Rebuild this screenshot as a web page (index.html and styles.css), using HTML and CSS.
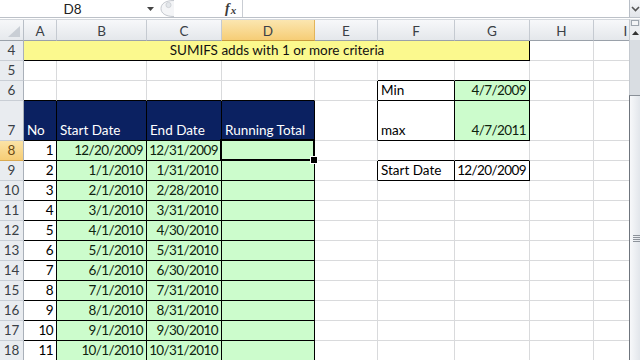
FILE: index.html
```html
<!DOCTYPE html>
<html>
<head>
<meta charset="utf-8">
<link rel="stylesheet" href="styles.css">
</head>
<body>
<div class="app">
  <div class="fbar">
    <div class="namebox"><span class="nb-text">D8</span>
      <svg class="caret" width="7" height="4" viewBox="0 0 7 4"><path d="M0 0H7L3.5 4Z" fill="#444"/></svg>
    </div>
    <div class="splitter">
      <svg width="20" height="17" viewBox="0 0 20 17"><path d="M16 0.5C7 0.5 3 4 3 8.5C3 13 7 16.5 16 16.5" fill="#f4f5f7" stroke="#c4c8ce"/><circle cx="10.5" cy="5" r="2.6" fill="#e3e6ea" stroke="#c9cdd2" stroke-width="0.8"/></svg>
    </div>
    <div class="fx"><span class="fx-f">f</span><span class="fx-x">x</span></div>
    <div class="finput"></div>
    <div class="fexpand">
      <svg width="9" height="6" viewBox="0 0 9 6"><path d="M1 1L4.5 4.5L8 1" fill="none" stroke="#555" stroke-width="1.6"/></svg>
    </div>
  </div>
  <div class="main">
    <div class="sheet">
      <!-- header row -->
      <div class="corner"><svg width="12" height="11" viewBox="0 0 12 11"><path d="M12 0V11H0Z" fill="#c9ced5"/></svg></div>
      <div class="ch">A</div><div class="ch">B</div><div class="ch">C</div><div class="ch ch-sel">D</div><div class="ch">E</div><div class="ch">F</div><div class="ch">G</div><div class="ch">H</div><div class="ch">I</div>

      <!-- row 4 -->
      <div class="rh">4</div>
      <div class="c y ctr br bb span7">SUMIFS adds with 1 or more criteria</div>
      <div class="c"></div><div class="c"></div>

      <!-- row 5 -->
      <div class="rh">5</div>
      <div class="c"></div><div class="c"></div><div class="c"></div><div class="c"></div><div class="c"></div>
      <div class="c bb"></div><div class="c bb"></div><div class="c"></div><div class="c"></div>

      <!-- row 6 -->
      <div class="rh">6</div>
      <div class="c bb"></div><div class="c bb"></div><div class="c bb"></div><div class="c bb"></div><div class="c br"></div>
      <div class="c br bb">Min</div><div class="c g num br bb">4/7/2009</div><div class="c"></div><div class="c"></div>

      <!-- row 7 -->
      <div class="rh">7</div>
      <div class="c nv br bb">No</div><div class="c nv br bb">Start Date</div><div class="c nv br bb">End Date</div><div class="c nv br bb">Running Total</div>
      <div class="c br"></div>
      <div class="c br bb">max</div><div class="c g num br bb">4/7/2011</div><div class="c"></div><div class="c"></div>

      <!-- row 8 -->
      <div class="rh rh-sel">8</div>
      <div class="c num br bb">1</div><div class="c g num br bb">12/20/2009</div><div class="c g num br bb">12/31/2009</div><div class="c g br bb sel"></div>
      <div class="c"></div><div class="c bb"></div><div class="c bb"></div><div class="c"></div><div class="c"></div>

      <!-- row 9 -->
      <div class="rh">9</div>
      <div class="c num br bb">2</div><div class="c g num br bb">1/1/2010</div><div class="c g num br bb">1/31/2010</div><div class="c g br bb"></div>
      <div class="c br"></div><div class="c br bb">Start Date</div><div class="c num br bb">12/20/2009</div><div class="c"></div><div class="c"></div>

      <!-- row 10 -->
      <div class="rh">10</div>
      <div class="c num br bb">3</div><div class="c g num br bb">2/1/2010</div><div class="c g num br bb">2/28/2010</div><div class="c g br bb"></div>
      <div class="c"></div><div class="c"></div><div class="c"></div><div class="c"></div><div class="c"></div>

      <!-- row 11 -->
      <div class="rh">11</div>
      <div class="c num br bb">4</div><div class="c g num br bb">3/1/2010</div><div class="c g num br bb">3/31/2010</div><div class="c g br bb"></div>
      <div class="c"></div><div class="c"></div><div class="c"></div><div class="c"></div><div class="c"></div>

      <!-- row 12 -->
      <div class="rh">12</div>
      <div class="c num br bb">5</div><div class="c g num br bb">4/1/2010</div><div class="c g num br bb">4/30/2010</div><div class="c g br bb"></div>
      <div class="c"></div><div class="c"></div><div class="c"></div><div class="c"></div><div class="c"></div>

      <!-- row 13 -->
      <div class="rh">13</div>
      <div class="c num br bb">6</div><div class="c g num br bb">5/1/2010</div><div class="c g num br bb">5/31/2010</div><div class="c g br bb"></div>
      <div class="c"></div><div class="c"></div><div class="c"></div><div class="c"></div><div class="c"></div>

      <!-- row 14 -->
      <div class="rh">14</div>
      <div class="c num br bb">7</div><div class="c g num br bb">6/1/2010</div><div class="c g num br bb">6/30/2010</div><div class="c g br bb"></div>
      <div class="c"></div><div class="c"></div><div class="c"></div><div class="c"></div><div class="c"></div>

      <!-- row 15 -->
      <div class="rh">15</div>
      <div class="c num br bb">8</div><div class="c g num br bb">7/1/2010</div><div class="c g num br bb">7/31/2010</div><div class="c g br bb"></div>
      <div class="c"></div><div class="c"></div><div class="c"></div><div class="c"></div><div class="c"></div>

      <!-- row 16 -->
      <div class="rh">16</div>
      <div class="c num br bb">9</div><div class="c g num br bb">8/1/2010</div><div class="c g num br bb">8/31/2010</div><div class="c g br bb"></div>
      <div class="c"></div><div class="c"></div><div class="c"></div><div class="c"></div><div class="c"></div>

      <!-- row 17 -->
      <div class="rh">17</div>
      <div class="c num br bb">10</div><div class="c g num br bb">9/1/2010</div><div class="c g num br bb">9/30/2010</div><div class="c g br bb"></div>
      <div class="c"></div><div class="c"></div><div class="c"></div><div class="c"></div><div class="c"></div>

      <!-- row 18 -->
      <div class="rh">18</div>
      <div class="c num br bb">11</div><div class="c g num br bb">10/1/2010</div><div class="c g num br bb">10/31/2010</div><div class="c g br bb"></div>
      <div class="c"></div><div class="c"></div><div class="c"></div><div class="c"></div><div class="c"></div>
    </div>
    <div class="vscroll">
      <div class="vs-split"></div>
      <div class="vs-up"><svg width="7" height="4" viewBox="0 0 7 4"><path d="M0 4H7L3.5 0Z" fill="#333"/></svg></div>
      <div class="vs-track"></div>
      <div class="vs-thumb">
        <div class="grip"><span></span><span></span><span></span><span></span></div>
      </div>
    </div>
  </div>
</div>
</body>
</html>
```
FILE: styles.css
```css
* { box-sizing: border-box; }
html, body { margin: 0; padding: 0; }
body {
  width: 640px;
  height: 360px;
  overflow: hidden;
  background: #fff;
  font-family: Lato, "Open Sans", sans-serif;
}
.app { width: 640px; height: 360px; display: flex; flex-direction: column; }

/* formula bar */
.fbar {
  height: 18px;
  display: flex;
  border-bottom: 1px solid #bcc1c8;
  background: #fff;
  flex: none;
}
.namebox {
  width: 158px;
  position: relative;
  display: flex;
  align-items: center;
}
.nb-text {
  width: 145px;
  text-align: center;
  font-size: 13.5px;
  color: #222;
  padding-top: 1px;
}
.caret { margin-left: 2px; }
.splitter { width: 66px; display: flex; align-items: flex-start; }
.fx {
  width: 19px;
  font-family: "Liberation Serif", serif;
  font-style: italic;
  font-weight: bold;
  font-size: 14px;
  color: #3a3a3a;
  display: flex;
  align-items: center;
  border-right: 1px solid #c9cdd3;
  padding-left: 1px;
}
.fx-x { font-size: 11px; margin-left: 1px; margin-top: 2px; }
.finput { flex: 1; }
.fexpand {
  width: 11px;
  border-left: 1px solid #b8bec6;
  background: linear-gradient(#f5f6f8, #e2e5ea);
  display: flex;
  align-items: center;
  justify-content: center;
}

.main {
  flex: 1;
  display: flex;
  margin-top: 1px;
  min-height: 0;
}
.sheet {
  width: 629px;
  overflow: hidden;
  display: grid;
  grid-template-columns: 24px 33px 90px 75px 93px 63px 77px 75px 64px 64px;
  grid-template-rows: 21px 20px 20px 20px 40px repeat(11, 20px);
  font-size: 13.5px;
  color: #000;
  border-top: 1px solid #d4d8dd;
}

.corner {
  background: linear-gradient(#f6f7f9, #e6e9ed);
  border-right: 1px solid #b8bec6;
  border-bottom: 1px solid #9aa1aa;
  display: flex;
  align-items: flex-end;
  justify-content: flex-end;
  padding: 0 3px 3px 0;
}
.ch {
  background: linear-gradient(#f7f8fa, #e4e7eb);
  border-right: 1px solid #c5cad1;
  border-bottom: 1px solid #9aa1aa;
  display: flex;
  align-items: center;
  justify-content: center;
  color: #3a3f46;
  padding-top: 1px;
}
.ch-sel {
  background: linear-gradient(#fbe6b0, #f6cd76);
  border-right-color: #e2b45a;
  border-bottom-color: #c99a3e;
}
.rh {
  background: #e9ecf0;
  border-right: 1px solid #a9b0b9;
  border-bottom: 1px solid #c9ced5;
  display: flex;
  align-items: flex-end;
  justify-content: center;
  color: #3a3f46;
  padding-bottom: 1px;
  line-height: 17px;
}
.rh-sel {
  background: linear-gradient(#fbe3a6, #f6cd76);
  color: #6b4a14;
  border-bottom-color: #d9aa52;
}

.c {
  border-right: 1px solid #d9dadc;
  border-bottom: 1px solid #d9dadc;
  display: flex;
  align-items: flex-end;
  padding: 0 2px 1px 3px;
  line-height: 17px;
  white-space: nowrap;
  overflow: hidden;
  min-width: 0;
}
.num { justify-content: flex-end; padding-right: 3px; letter-spacing: -0.6px; }
.ctr { justify-content: center; }
.br { border-right-color: #000; }
.bb { border-bottom-color: #000; }
.g { background: #ccfccc; color: #0e220e; }
.y { background: #fbf98e; color: #111; }
.nv { background: #0b2161; color: #fff; }
.span7 { grid-column: span 7; }

.sel { position: relative; overflow: visible; }
.sel::before {
  content: "";
  position: absolute;
  left: -2px;
  top: -2px;
  right: -1px;
  bottom: -1px;
  border: 2px solid #000;
}
.sel::after {
  content: "";
  position: absolute;
  right: -4px;
  bottom: -4px;
  width: 6px;
  height: 6px;
  background: #000;
  border: 1px solid #fff;
}

/* vertical scrollbar */
.vscroll {
  width: 11px;
  display: flex;
  flex-direction: column;
  background: #dfe2e6;
  border-left: 1px solid #c4c9cf;
}
.vs-split {
  height: 6px;
  margin: 1px 1px 0 1px;
  border: 1px solid #9ea5ae;
  background: #f3f4f6;
}
.vs-up {
  height: 14px;
  display: flex;
  align-items: center;
  justify-content: center;
  background: #eceef1;
}
.vs-track { height: 55px; background: #d9dde2; }
.vs-thumb {
  flex: 1;
  margin-left: -1px;
  border-left: 1px solid #6f757d;
  border-top: 1px solid #8a9098;
  background: linear-gradient(90deg, #f7f8fa, #e2e6eb);
  position: relative;
}
.grip {
  position: absolute;
  top: 139px;
  left: 3px;
  display: flex;
  flex-direction: column;
  gap: 1px;
}
.grip span { display: block; width: 7px; height: 1px; background: #8d939b; }
```
